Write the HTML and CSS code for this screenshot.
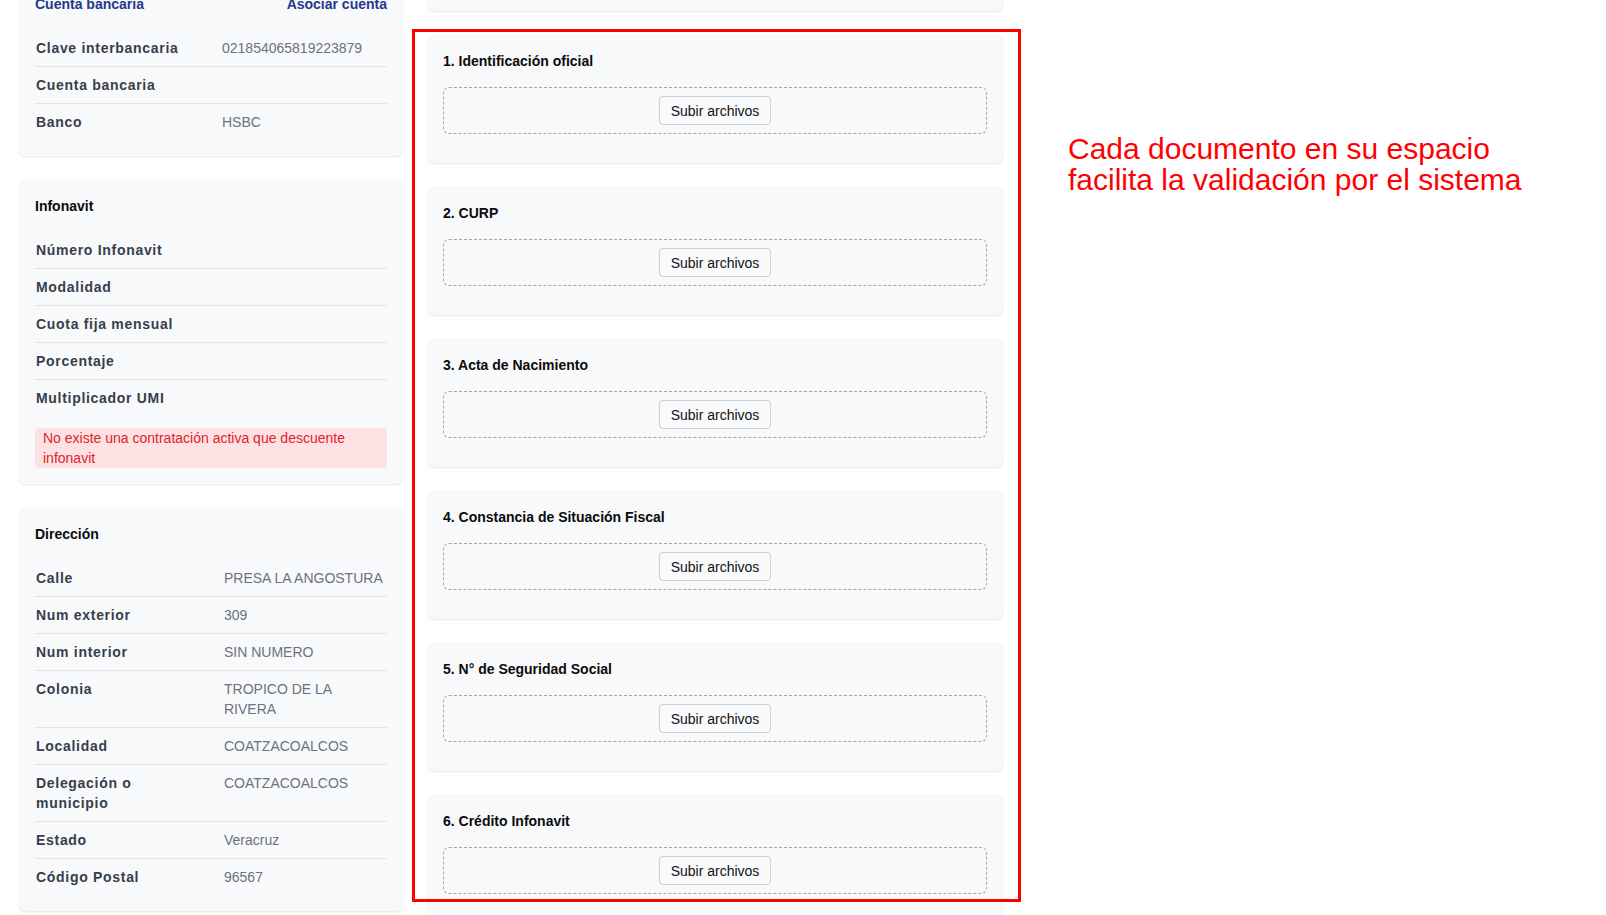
FILE: index.html
```html
<!DOCTYPE html>
<html lang="es">
<head>
<meta charset="utf-8">
<title>Documentos</title>
<link rel="stylesheet" href="styles.css">
</head>
<body>
<div class="page">
  <div class="col-left">
    <section class="card">
      <div class="card-head">
        <a class="head-link">Cuenta bancaria</a>
        <a class="head-link">Asociar cuenta</a>
      </div>
      <dl class="rows rows-bank">
        <div class="row"><dt>Clave interbancaria</dt><dd>021854065819223879</dd></div>
        <div class="row"><dt>Cuenta bancaria</dt><dd></dd></div>
        <div class="row"><dt>Banco</dt><dd>HSBC</dd></div>
      </dl>
    </section>

    <section class="card">
      <h3 class="card-title">Infonavit</h3>
      <dl class="rows">
        <div class="row"><dt>Número Infonavit</dt><dd></dd></div>
        <div class="row"><dt>Modalidad</dt><dd></dd></div>
        <div class="row"><dt>Cuota fija mensual</dt><dd></dd></div>
        <div class="row"><dt>Porcentaje</dt><dd></dd></div>
        <div class="row"><dt>Multiplicador UMI</dt><dd></dd></div>
      </dl>
      <div class="alert">No existe una contratación activa que descuente infonavit</div>
    </section>

    <section class="card">
      <h3 class="card-title">Dirección</h3>
      <dl class="rows rows-address">
        <div class="row"><dt>Calle</dt><dd>PRESA LA ANGOSTURA</dd></div>
        <div class="row"><dt>Num exterior</dt><dd>309</dd></div>
        <div class="row"><dt>Num interior</dt><dd>SIN NUMERO</dd></div>
        <div class="row"><dt>Colonia</dt><dd>TROPICO DE LA RIVERA</dd></div>
        <div class="row"><dt>Localidad</dt><dd>COATZACOALCOS</dd></div>
        <div class="row"><dt>Delegación o municipio</dt><dd>COATZACOALCOS</dd></div>
        <div class="row"><dt>Estado</dt><dd>Veracruz</dd></div>
        <div class="row"><dt>Código Postal</dt><dd>96567</dd></div>
      </dl>
    </section>
  </div>

  <div class="col-right">
    <section class="card card-stub"></section>

    <section class="card doc">
      <h3 class="card-title">1. Identificación oficial</h3>
      <div class="drop"><button class="btn" type="button">Subir archivos</button></div>
    </section>
    <section class="card doc">
      <h3 class="card-title">2. CURP</h3>
      <div class="drop"><button class="btn" type="button">Subir archivos</button></div>
    </section>
    <section class="card doc">
      <h3 class="card-title">3. Acta de Nacimiento</h3>
      <div class="drop"><button class="btn" type="button">Subir archivos</button></div>
    </section>
    <section class="card doc">
      <h3 class="card-title">4. Constancia de Situación Fiscal</h3>
      <div class="drop"><button class="btn" type="button">Subir archivos</button></div>
    </section>
    <section class="card doc">
      <h3 class="card-title">5. N° de Seguridad Social</h3>
      <div class="drop"><button class="btn" type="button">Subir archivos</button></div>
    </section>
    <section class="card doc">
      <h3 class="card-title">6. Crédito Infonavit</h3>
      <div class="drop"><button class="btn" type="button">Subir archivos</button></div>
    </section>
  </div>
</div>

<div class="highlight"></div>
<p class="note">Cada documento en su espacio<br>facilita la validación por el sistema</p>
</body>
</html>
```

FILE: styles.css
```css
html, body {
  margin: 0;
  padding: 0;
  overflow: hidden;
  background: #ffffff;
}

body {
  font-family: "Liberation Sans", Arial, Helvetica, sans-serif;
  font-size: 14px;
  line-height: 20px;
  color: #111111;
  position: relative;
  height: 915px;
}

.page {
  display: flex;
  align-items: flex-start;
  gap: 24px;
  padding-left: 19px;
  margin-top: -22px;
}

.col-left {
  width: 384px;
  display: flex;
  flex-direction: column;
  gap: 24px;
}

.col-right {
  width: 576px;
  display: flex;
  flex-direction: column;
  gap: 24px;
}

.card {
  background: #f8f9fb;
  border-radius: 6px;
  box-shadow: 0 1px 2px rgba(0, 0, 0, 0.09), 0 0 1px rgba(0, 0, 0, 0.05);
  padding: 16px;
  box-sizing: border-box;
}

.card-stub {
  height: 33px;
  padding: 0;
}

.card-head {
  display: flex;
  justify-content: space-between;
  margin-bottom: 16px;
}

.head-link {
  color: #1e3a8a;
  font-weight: bold;
  text-decoration: none;
}

.card-title {
  margin: 0 0 16px;
  font-size: 14px;
  line-height: 20px;
  font-weight: bold;
  color: #0b0b0b;
}

.rows {
  margin: 0;
}

.row {
  display: grid;
  grid-template-columns: 163px 1fr;
  column-gap: 24px;
  padding: 8px 0;
  border-bottom: 1px solid #e3e5e9;
}

.rows-address .row {
  column-gap: 26px;
}

.row:last-child {
  border-bottom: none;
}

.row dt {
  font-weight: bold;
  letter-spacing: 0.7px;
  color: #373e4b;
  margin: 0 0 0 1px;
}

.row dd {
  margin: 0;
  color: #6b7280;
}

.alert {
  margin-top: 12px;
  background: #fde1e3;
  color: #e0242c;
  padding: 0 8px;
  border-radius: 4px;
}

.doc {
  padding-bottom: 29px;
}

.drop {
  border: 1px dashed #a4a8af;
  border-radius: 6px;
  padding: 8px;
  display: flex;
  justify-content: center;
}

.btn {
  font-family: "Liberation Sans", Arial, Helvetica, sans-serif;
  font-size: 14px;
  line-height: 17px;
  padding: 6px 11px 4px;
  border: 1px solid #cbced4;
  border-radius: 4px;
  background: #f9fafb;
  color: #111111;
}

.highlight {
  position: absolute;
  left: 412px;
  top: 29px;
  width: 609px;
  height: 873px;
  border: 3px solid #ff0000;
  box-sizing: border-box;
  pointer-events: none;
}

.note {
  position: absolute;
  left: 1068px;
  top: 133px;
  margin: 0;
  font-family: "Liberation Sans", Arial, Helvetica, sans-serif;
  font-size: 30px;
  line-height: 31px;
  color: #ff0000;
}
```
